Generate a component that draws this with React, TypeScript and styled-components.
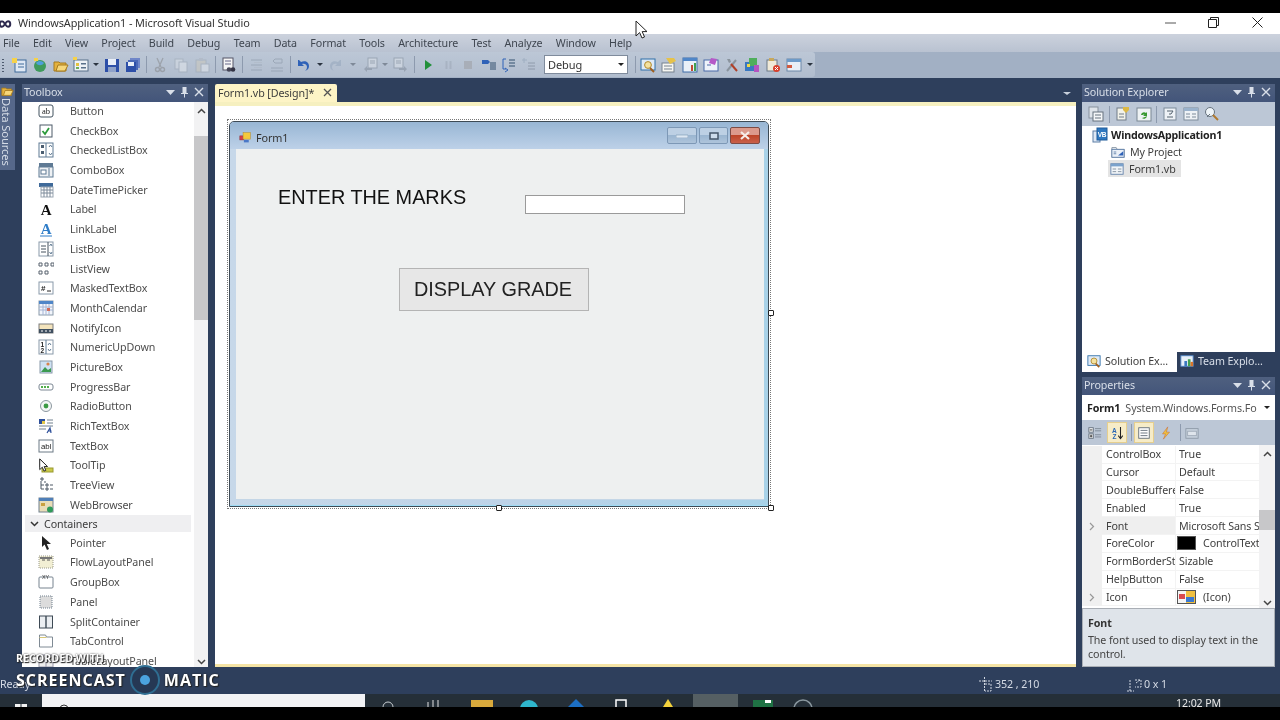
import React from 'react';
import styled, { createGlobalStyle } from 'styled-components';

const GlobalStyle = createGlobalStyle`
  html, body { margin: 0; padding: 0; background: #000; }
  body { font-family: "Noto Sans", "Open Sans", sans-serif; font-size: 10.7px; letter-spacing: -0.1px; overflow: hidden; }
  * { box-sizing: border-box; }
`;

const Frame = styled.div`
  position: relative;
  width: 1280px;
  height: 720px;
  display: flex;
  flex-direction: column;
  overflow: hidden;
  background: #000;
  filter: blur(0.3px);
`;
const BlackBar = styled.div`height: 13px; flex: none; background: #000;`;

const TitleBar = styled.div`
  height: 21px;
  flex: none;
  background: #fff;
  display: flex;
  align-items: center;
  color: #333;
  font-size: 10.9px;
`;
const VsLogo = styled.div`width: 18px; display: flex; align-items: center; overflow: hidden;`;
const TitleText = styled.div`flex: 1; padding-bottom: 2px;`;
const WinButton = styled.div<{ $w: number }>`
  width: ${p => p.$w}px;
  display: flex;
  justify-content: center;
  padding-bottom: 2px;
`;

const MenuBar = styled.div`
  height: 18px;
  flex: none;
  display: flex;
  align-items: center;
  padding: 0 0 1px 3px;
  gap: 13.3px;
  background: linear-gradient(#ccd2dd, #b9c2d1);
  color: #3f4650;
`;
const MenuItem = styled.div``;

const ToolStrip = styled.div`
  height: 26px;
  flex: none;
  background: #a2b0c4;
  display: flex;
`;
const ToolTray = styled.div`
  width: 815px;
  height: 25px;
  display: flex;
  align-items: center;
  background: linear-gradient(#bcc7d6, #b1bdce);
  border-radius: 0 3px 3px 0;
  position: relative;
`;
const Grip = styled.div`
  width: 8.5px;
  height: 14px;
  background-image: radial-gradient(#4d5a6e 50%, transparent 55%);
  background-size: 2px 3px;
  background-repeat: repeat-y;
  background-position: 2px 0;
`;
const ToolBtn = styled.div<{ $w: number; $faded?: boolean }>`
  width: ${p => p.$w}px;
  flex: none;
  display: flex;
  justify-content: center;
  align-items: center;
  opacity: ${p => (p.$faded ? 0.45 : 1)};
`;
const ToolSep = styled.div<{ $w: number }>`
  width: ${p => p.$w}px;
  flex: none;
  height: 17px;
  display: flex;
  justify-content: center;
  &::after { content: ''; width: 1px; background: #8d9aae; }
`;
const ToolGap = styled.div<{ $w: number }>`width: ${p => p.$w}px; flex: none;`;
const Caret = styled.div<{ $w: number; $faded?: boolean }>`
  width: ${p => p.$w}px;
  flex: none;
  display: flex;
  justify-content: center;
  opacity: ${p => (p.$faded ? 0.4 : 1)};
  &::after {
    content: '';
    border-left: 3px solid transparent;
    border-right: 3px solid transparent;
    border-top: 3px solid #2b3440;
  }
`;
const ConfigCombo = styled.div`
  width: 84px;
  height: 19px;
  margin-left: 5px;
  flex: none;
  background: #fff;
  border: 1px solid #7f8b9c;
  display: flex;
  align-items: center;
  justify-content: space-between;
  padding: 0 3px;
  color: #333;
  font-size: 11px;
`;
const ComboArrow = styled.span`
  border-left: 3px solid transparent;
  border-right: 3px solid transparent;
  border-top: 3px solid #222;
`;

const Main = styled.div`
  flex: 1;
  min-height: 0;
  display: flex;
  padding-top: 6px;
  background: #2e3f5c;
`;
const SideStrip = styled.div`width: 22px; flex: none;`;
const SideTab = styled.div`
  width: 15px;
  height: 86px;
  background: #56688a;
  display: flex;
  flex-direction: column;
  align-items: center;
  color: #d4dbe6;
`;
const SideTabText = styled.div`
  writing-mode: vertical-rl;
  font-size: 11.2px;
  margin: 1px 3px 0 0;
  line-height: 12px;
`;

const DockPane = styled.div`
  width: 186px;
  flex: none;
  display: flex;
  flex-direction: column;
`;
const PaneHeader = styled.div`
  height: 18px;
  flex: none;
  padding: 0 4px 2px 2px;
  display: flex;
  align-items: center;
  justify-content: space-between;
  background: linear-gradient(#4f607f, #43557a);
  color: #d9dfe9;
`;
const PaneTools = styled.div`display: flex; align-items: center; gap: 5px;`;
const ToolboxBody = styled.div`
  flex: 1;
  min-height: 0;
  display: flex;
  background: #fff;
`;
const ToolList = styled.div`flex: 1; min-width: 0; overflow: hidden;`;
const ToolRows = styled.div`margin-top: -0.8px;`;
const ToolRow = styled.div`
  height: 19.7px;
  display: flex;
  align-items: center;
  color: #4d4d4d;
`;
const ToolIcon = styled.div`
  width: 48px;
  padding-left: 16px;
  display: flex;
  flex: none;
`;
const GroupRow = styled.div`
  height: 18.3px;
  padding: 0.6px 1px;
  margin: 0 2px;
`;
const GroupInner = styled.div`
  height: 17px;
  padding-left: 5px;
  display: flex;
  align-items: center;
  gap: 5px;
  background: #efeff1;
  color: #3c3c3c;
`;
const ScrollTrack = styled.div<{ $w: number }>`
  width: ${p => p.$w}px;
  flex: none;
  display: flex;
  flex-direction: column;
  align-items: stretch;
  background: #f2f2f3;
`;
const ScrollEnd = styled.div<{ $h: number }>`
  height: ${p => p.$h}px;
  flex: none;
  display: flex;
  justify-content: center;
  padding-top: 6px;
`;
const ScrollThumb = styled.div<{ $h: number }>`
  height: ${p => p.$h}px;
  flex: none;
  background: #c7c7c9;
`;
const ScrollFill = styled.div`flex: 1;`;

const DocColumn = styled.div`
  width: 861px;
  margin-left: 7px;
  flex: none;
  display: flex;
  flex-direction: column;
`;
const DocTabs = styled.div`
  height: 18px;
  flex: none;
  display: flex;
  justify-content: space-between;
  align-items: stretch;
`;
const DocTab = styled.div`
  width: 122px;
  padding: 0 5px 1px 3px;
  display: flex;
  align-items: center;
  justify-content: space-between;
  background: #fdf4c6;
  border-radius: 2px 2px 0 0;
  color: #3d3d3d;
`;
const DocMenu = styled.div`
  width: 18px;
  padding-top: 8px;
  display: flex;
  justify-content: center;
  &::after {
    content: '';
    height: 0;
    border-left: 4px solid transparent;
    border-right: 4px solid transparent;
    border-top: 3px solid #c8d0dc;
  }
`;
const DocBody = styled.div`
  flex: 1;
  min-height: 0;
  background: #fff;
  border-top: 4px solid #f6f0c0;
  border-bottom: 3px solid #f5e4a5;
  padding: 13px 0 0 12px;
`;

const Selection = styled.div`
  position: relative;
  width: 544px;
  height: 390px;
  padding: 1px;
  border: 1px dotted #777;
`;
const Handle = styled.div<{ $x: number; $y: number }>`
  position: absolute;
  left: ${p => p.$x}px;
  top: ${p => p.$y}px;
  width: 6px;
  height: 6px;
  background: #fff;
  border: 1px solid #222;
  border-radius: 1px;
`;
const FormWindow = styled.div`
  height: 100%;
  display: flex;
  flex-direction: column;
  border: 1px solid #3d4a55;
  border-radius: 5px 5px 0 0;
  background: linear-gradient(90deg, #c7d8e9, #bed3e8 50%, #a8d2e8);
`;
const FormTitle = styled.div`
  height: 27px;
  flex: none;
  display: flex;
  align-items: center;
  padding: 0 8px 0 9px;
  background: linear-gradient(#98b6d4, #bdd1e8);
  border-radius: 4px 4px 0 0;
  color: #333;
`;
const FormName = styled.div`flex: 1; margin: 3px 0 0 4px; font-size: 10.8px;`;
const FormIcon = styled.div`display: flex; margin-top: 3px;`;
const Caption = styled.div<{ $w: number; $close?: boolean }>`
  width: ${p => p.$w}px;
  height: 17px;
  margin-left: 2px;
  display: flex;
  justify-content: center;
  align-items: center;
  border: 1px solid ${p => (p.$close ? '#7d4b45' : '#7d98b6')};
  border-radius: 2px;
  background: ${p =>
    p.$close ? 'linear-gradient(#dc9a8c 45%, #bd4529 50%, #c9604a)' : 'linear-gradient(#bdd0e4 45%, #9bb6d1 50%, #aec4db)'};
`;
const Client = styled.div`
  position: relative;
  flex: 1;
  margin: 0 4px 6px 6px;
  background: #eef0f0;
  box-shadow: 0 1px 0 #c4d6e6;
`;
const FormBase = styled.div`
  height: 1px;
  flex: none;
  background: #9fdcf5;
`;
const FormLabel = styled.div`
  position: absolute;
  left: 42px;
  top: 37px;
  font-family: "Liberation Sans", Arial, sans-serif;
  font-size: 19.85px;
  letter-spacing: 0;
  color: #111;
  white-space: nowrap;
`;
const FormInput = styled.div`
  position: absolute;
  left: 289px;
  top: 46px;
  width: 160px;
  height: 19px;
  background: #fff;
  border: 1px solid #9a9a9a;
`;
const FormButton = styled.div`
  position: absolute;
  left: 163px;
  top: 119px;
  width: 190px;
  height: 43px;
  padding-left: 14px;
  display: flex;
  align-items: center;
  font-family: "Liberation Sans", Arial, sans-serif;
  font-size: 19.85px;
  letter-spacing: 0;
  color: #222;
  background: #e7e7e7;
  border: 1px solid #b4b4b4;
`;

const RightColumn = styled.div`
  width: 193px;
  margin-left: 6px;
  flex: none;
  display: flex;
  flex-direction: column;
`;
const PaneBar = styled.div<{ $h: number }>`
  height: ${p => p.$h}px;
  flex: none;
  display: flex;
  align-items: center;
  background: #bcc7d6;
  padding-left: 3px;
`;
const SolutionTree = styled.div`
  height: 226px;
  flex: none;
  background: #fff;
  color: #3d3d3d;
`;
const TreeRow = styled.div<{ $indent: number; $bold?: boolean }>`
  height: 17.2px;
  padding-left: ${p => p.$indent}px;
  display: flex;
  align-items: center;
  gap: 3px;
  font-weight: ${p => (p.$bold ? 700 : 400)};
  letter-spacing: ${p => (p.$bold ? '-0.2px' : '-0.1px')};
  color: ${p => (p.$bold ? '#222' : '#3d3d3d')};
`;
const TreeLabel = styled.div<{ $selected?: boolean }>`
  display: flex;
  align-items: center;
  gap: 5px;
  height: 17px;
  padding: 0 5px 0 2px;
  background: ${p => (p.$selected ? '#e4e4e4' : 'transparent')};
`;
const PaneTabs = styled.div`
  height: 20px;
  flex: none;
  display: flex;
`;
const PaneTab = styled.div<{ $active?: boolean }>`
  width: ${p => (p.$active ? 95 : 98)}px;
  display: flex;
  align-items: center;
  gap: 4px;
  padding: 0 0 2px ${p => (p.$active ? 5 : 3)}px;
  background: ${p => (p.$active ? '#fff' : 'transparent')};
  color: ${p => (p.$active ? '#3d3d3d' : '#d9dfe9')};
`;
const PropsPane = styled.div`
  flex: 1;
  min-height: 0;
  margin-top: 5px;
  display: flex;
  flex-direction: column;
`;
const ObjectCombo = styled.div`
  height: 25px;
  flex: none;
  background: #fff;
  display: flex;
  align-items: center;
  padding: 0 5px;
  gap: 5px;
  color: #555;
  white-space: nowrap;
  overflow: hidden;
`;
const ObjectName = styled.b`color: #222; font-weight: 700;`;
const ObjectType = styled.span`flex: 1; overflow: hidden;`;
const PropToggle = styled.div<{ $on?: boolean }>`
  width: 20px;
  height: 21px;
  flex: none;
  margin-right: 2px;
  display: flex;
  align-items: center;
  justify-content: center;
  background: ${p => (p.$on ? '#f6ecc8' : 'transparent')};
  border: 1px solid ${p => (p.$on ? '#e6cf8e' : 'transparent')};
`;
const PropGrid = styled.div`
  height: 163px;
  flex: none;
  display: flex;
  background: #fff;
  overflow: hidden;
`;
const PropRows = styled.div`flex: 1; min-width: 0; padding-top: 0.8px;`;
const PropRow = styled.div`
  height: 17.85px;
  display: flex;
  align-items: center;
  color: #3f3f3f;
`;
const Gutter = styled.div`
  width: 20px;
  height: 100%;
  flex: none;
  display: flex;
  align-items: center;
  justify-content: center;
  background: #f0f0f0;
  color: #aaa;
`;
const PropName = styled.div<{ $hot?: boolean }>`
  width: 73px;
  height: 100%;
  flex: none;
  padding-left: 4px;
  display: flex;
  align-items: center;
  overflow: hidden;
  white-space: nowrap;
  border-bottom: 1px solid #f3f3f3;
  background: ${p => (p.$hot ? '#efefef' : 'transparent')};
`;
const PropValue = styled.div`
  flex: 1;
  min-width: 0;
  height: 100%;
  padding-left: 3px;
  display: flex;
  align-items: center;
  gap: 7px;
  overflow: hidden;
  white-space: nowrap;
  border-bottom: 1px solid #f3f3f3;
  border-left: 1px solid #f3f3f3;
`;
const Swatch = styled.div`
  width: 19px;
  height: 14px;
  margin-left: -2px;
  flex: none;
  display: flex;
  background: #000;
  border: 1px solid #555;
`;
const IconSwatchBox = styled(Swatch)`
  background: linear-gradient(90deg, #f4f4f4 50%, #f0c040 50%);
`;
const PropHelp = styled.div`
  flex: 1;
  min-height: 0;
  padding: 7px 5px 0;
  background: #dfe4ea;
  border: 1px solid #a9aeb5;
  color: #444;
  line-height: 14.5px;
`;
const HelpTitle = styled.div`font-weight: 700; color: #333; margin-bottom: 2px;`;

const StatusBar = styled.div`
  height: 27px;
  flex: none;
  display: flex;
  align-items: center;
  background: #2e3f5c;
  color: #d5dbe5;
  padding-top: 7px;
`;
const StatusText = styled.div`flex: none; width: 978px;`;
const StatusCell = styled.div<{ $w: number }>`
  width: ${p => p.$w}px;
  flex: none;
  display: flex;
  align-items: center;
  gap: 2px;
`;

const TaskBar = styled.div`
  height: 13px;
  flex: none;
  display: flex;
  align-items: flex-start;
  background: #252f38;
  overflow: hidden;
`;
const StartSlot = styled.div`
  width: 42px;
  height: 13px;
  flex: none;
  display: flex;
  justify-content: center;
  padding-top: 10px;
`;
const SearchBox = styled.div`
  width: 323px;
  height: 13px;
  flex: none;
  padding: 10px 0 0 17px;
  display: flex;
  background: #f3f3f5;
`;
const TaskIcon = styled.div<{ $w: number; $active?: boolean }>`
  width: ${p => p.$w}px;
  height: 13px;
  flex: none;
  display: flex;
  justify-content: center;
  padding-top: 5px;
  background: ${p => (p.$active ? '#555f63' : 'transparent')};
`;
const Clock = styled.div`
  width: 44px;
  margin-left: 358px;
  margin-top: 3px;
  flex: none;
  color: #e8e8e8;
  font-size: 10.6px;
  line-height: 13px;
  white-space: nowrap;
`;

const Watermark = styled.div`
  position: absolute;
  left: 16px;
  top: 651px;
  color: #fff;
  font-family: "Open Sans", sans-serif;
  font-weight: 700;
  letter-spacing: 0;
  text-shadow: 0 0 2px #222, 1px 1px 1px #222;
`;
const WmSmall = styled.div`font-size: 10.5px; line-height: 14px; letter-spacing: 0.1px;`;
const WmRow = styled.div`
  display: flex;
  align-items: center;
  gap: 4px;
  font-size: 16px;
  line-height: 30px;
  letter-spacing: 1px;
`;
const WmLogo = styled.div`
  width: 30px;
  height: 30px;
  display: flex;
  align-items: center;
  justify-content: center;
  border: 2px solid #2f6e92;
  border-radius: 50%;
  background: rgba(30, 50, 75, 0.5);
  &::after { content: ''; width: 10px; height: 10px; border-radius: 50%; background: #4ba3df; }
`;
const Cursor = styled.svg<{ $x: number; $y: number }>`
  position: absolute;
  left: ${p => p.$x}px;
  top: ${p => p.$y}px;
`;

const arrowPath = 'M1 1V16L4.6 12.6 7 18 9.5 17 7.2 11.6H12Z';

const F = ({ children }: { children: React.ReactNode }) => <>{children}</>;

// 16x16 drawings for the toolbar and the toolbox
const icons: Record<string, React.ReactNode> = {
  newProject: <F><rect x="4" y="3" width="11" height="12" fill="#dfe8f4" stroke="#3f6a9a" /><rect x="1" y="1" width="5" height="5" fill="#f6d24a" /><path d="M7 7h6M7 10h6" stroke="#3f6a9a" /></F>,
  web: <F><circle cx="8" cy="9" r="6" fill="#3f9a5c" /><path d="M4 6c3-3 6-2 8 0-2 3-6 3-8 0Z" fill="#4f9fdc" /><rect x="2" y="1" width="4" height="3" fill="#f6d24a" /></F>,
  open: <F><path d="M1 5h5l1 1h6v8H1Z" fill="#e4b23e" stroke="#a57a1e" /><path d="M3 14l2-6h10l-3 6Z" fill="#f6d77a" stroke="#a57a1e" /></F>,
  addItem: <F><rect x="1" y="3" width="14" height="11" fill="#eef2f6" stroke="#59708a" /><rect x="3" y="6" width="3" height="3" fill="#e5c23e" /><rect x="8" y="6" width="5" height="1.5" fill="#59708a" /><rect x="3" y="10" width="3" height="2" fill="#6fae5c" /><rect x="8" y="10" width="5" height="1.5" fill="#59708a" /><rect x="0" y="0" width="4" height="3" fill="#f6d24a" /></F>,
  save: <F><rect x="1" y="2" width="14" height="13" fill="#2d4fa8" /><rect x="4" y="2" width="8" height="6" fill="#e8eef8" /><rect x="4" y="10" width="8" height="5" fill="#8fa2c8" /></F>,
  saveAll: <F><rect x="5" y="1" width="10" height="10" fill="#6f86c8" /><rect x="3" y="3" width="10" height="10" fill="#4a68b8" /><rect x="1" y="5" width="10" height="10" fill="#2d4fa8" /><rect x="3" y="5" width="6" height="4" fill="#e8eef8" /></F>,
  cut: <F><path d="M5 1l4 9M11 1L7 10" stroke="#7c7c7c" strokeWidth="1.3" /><circle cx="5.5" cy="12.5" r="2" fill="none" stroke="#7c7c7c" strokeWidth="1.4" /><circle cx="10.5" cy="12.5" r="2" fill="none" stroke="#7c7c7c" strokeWidth="1.4" /></F>,
  copy: <F><rect x="2" y="2" width="8" height="10" fill="#dfe4ea" stroke="#98a2ae" /><rect x="6" y="5" width="8" height="10" fill="#eef1f4" stroke="#98a2ae" /></F>,
  paste: <F><rect x="2" y="3" width="10" height="12" fill="#cfc9b8" stroke="#98a2ae" /><rect x="5" y="1" width="4" height="3" fill="#aab2bc" /><rect x="7" y="7" width="8" height="8" fill="#eef1f4" stroke="#98a2ae" /></F>,
  find: <F><rect x="2" y="1" width="10" height="12" fill="#f5f5f5" stroke="#556" /><path d="M4 4h6M4 7h6" stroke="#668" /><circle cx="12" cy="12.5" r="2.3" fill="#334" /><circle cx="8" cy="12.5" r="2.3" fill="#445" /></F>,
  indent: <F><path d="M3 3h11M3 8h11M3 13h11" stroke="#7b8797" /><path d="M6 5.5h8M6 10.5h8" stroke="#aeb6c2" /></F>,
  unindent: <F><path d="M2 14h12M2 11h12" stroke="#7b8797" /><path d="M6 2h7v4H6L4 4Z" fill="none" stroke="#7b8797" /></F>,
  undo: <F><path d="M3 3v6h6L7 7c3-1 5 1 5 3 0 2-1 3-2 4 3-1 4-3 4-5 0-4-4-6-8-4L4 3Z" fill="#2f62b8" /></F>,
  redo: <F><path d="M13 3v6H7l2-2c-3-1-5 1-5 3 0 2 1 3 2 4-3-1-4-3-4-5 0-4 4-6 8-4l2-2Z" fill="#8ea0b8" /></F>,
  navBack: <F><rect x="5" y="1" width="9" height="10" fill="#e4e8ee" stroke="#77828f" /><path d="M7 4h5M7 6h5" stroke="#77828f" /><path d="M1 12l3-3v2h5v2H4v2Z" fill="#77828f" /></F>,
  navFwd: <F><rect x="2" y="1" width="9" height="10" fill="#e4e8ee" stroke="#77828f" /><path d="M4 4h5M4 6h5" stroke="#77828f" /><path d="M15 12l-3-3v2H7v2h5v2Z" fill="#77828f" /></F>,
  start: <path d="M5 3l7 5-7 5Z" fill="#22903a" />,
  pause: <path d="M5.5 4h2v8h-2ZM9.5 4h2v8h-2Z" fill="#98a2b0" />,
  stop: <rect x="4" y="4" width="8" height="8" fill="#a8aeb8" />,
  stepInto: <F><path d="M1 3h6l2 2-2 2H1Z" fill="#2f62b8" /><path d="M9 6h6M9 8h6M9 10h6M9 12h6" stroke="#33506f" /></F>,
  stepOver: <F><path d="M5 2H2v10h3M4 11l3 2-3 2" stroke="#2f62b8" fill="none" /><path d="M8 3h6M8 6h6M8 9h6" stroke="#33506f" /></F>,
  stepOut: <F><path d="M1 3h5M3 1v5" stroke="#8296ac" /><path d="M7 6h7M7 9h7M7 12h7" stroke="#606d7d" /></F>,
  solution: <F><rect x="1" y="2" width="14" height="11" fill="#dfeaf6" stroke="#2f6fa8" /><circle cx="8" cy="8" r="3.4" fill="#f4e2a0" stroke="#b08a30" /><path d="M10 11l4 4" stroke="#a06020" strokeWidth="2" /></F>,
  properties: <F><rect x="1" y="6" width="12" height="9" fill="#f6f6f2" stroke="#77828f" /><path d="M3 9h8M3 12h8" stroke="#77828f" /><path d="M5 1l8 0 2 3-6 3Z" fill="#e6c24a" /></F>,
  objBrowser: <F><rect x="1" y="1" width="14" height="14" fill="#e9f0f8" stroke="#3e6ca8" /><rect x="1" y="1" width="14" height="3" fill="#4f86c8" /><rect x="9" y="8" width="2" height="6" fill="#c04a30" /><rect x="12" y="6" width="2" height="8" fill="#40a050" /></F>,
  dataSrc: <F><rect x="1" y="3" width="14" height="11" fill="#eef2fa" stroke="#4a6aa8" /><path d="M8 1l6 1-2 6-6-2Z" fill="#b558c8" /><path d="M4 8h4" stroke="#4a6aa8" /></F>,
  tools: <F><path d="M3 14L12 3" stroke="#8a949e" strokeWidth="2" /><path d="M13 14L7 7" stroke="#b04028" strokeWidth="2" /><path d="M3 2h3l1 3-2 1Z" fill="#8a949e" /></F>,
  layers: <F><rect x="1" y="5" width="9" height="9" fill="#3a78c0" /><rect x="5" y="1" width="8" height="8" fill="#4fae5c" /><rect x="10" y="8" width="5" height="7" fill="#b554c0" /><rect x="3" y="7" width="3" height="3" fill="#f0d84a" /></F>,
  clipError: <F><rect x="2" y="3" width="10" height="11" fill="#f0ead8" stroke="#6d7a88" /><rect x="4" y="1" width="5" height="3" fill="#c8a85c" /><circle cx="11.5" cy="11.5" r="3.5" fill="#d8402c" /><path d="M10 10l3 3M13 10l-3 3" stroke="#fff" /></F>,
  panelBar: <F><rect x="1" y="2" width="14" height="12" fill="#e8eef6" stroke="#6d88a8" /><rect x="1" y="2" width="14" height="3" fill="#6d9ac8" /><rect x="1" y="8" width="5" height="3" fill="#d05a40" /></F>,

  seFiles: <F><rect x="1" y="1" width="9" height="11" fill="#dfe4ea" stroke="#87929e" /><rect x="5" y="6" width="10" height="9" fill="#f4f6f8" stroke="#66727e" /><path d="M7 9h6M7 12h6" stroke="#66727e" /></F>,
  seDocs: <F><rect x="2" y="2" width="9" height="12" fill="#f2f2ea" stroke="#707c88" /><path d="M8 1h6v3l-3 3-3-3Z" fill="#dcb846" /><path d="M4 8h5M4 11h5" stroke="#707c88" /></F>,
  seRefresh: <F><rect x="1" y="2" width="14" height="13" fill="#eef2f4" stroke="#7a8894" /><path d="M5 9a3 3 0 0 1 5-2l1-1v4H7l1.500-1.300A1.500 1.500 0 0 0 6.500 9Z" fill="#37982f" /><path d="M11 10a3 3 0 0 1-5 2l3-1Z" fill="#37982f" /></F>,
  seCode: <F><rect x="2" y="2" width="12" height="12" fill="#eef2f6" stroke="#7d8b9a" /><path d="M5 5h6l-2 3H7M5 11h6" stroke="#54626f" fill="none" /></F>,
  seDesigner: <F><rect x="1" y="2" width="14" height="12" fill="#eef2f6" stroke="#7d8b9a" /><rect x="1" y="2" width="14" height="3" fill="#9ab2cc" /><path d="M3 8h4M9 8h4M3 11h4M9 11h4" stroke="#7d8b9a" /></F>,
  seView: <F><circle cx="6" cy="6" r="4.5" fill="#eef4f8" stroke="#66727e" /><path d="M9 9l5 5" stroke="#b07a30" strokeWidth="2" /><path d="M3 11l3-3" stroke="#66727e" /></F>,
  vbProject: <F><rect x="1" y="4" width="7" height="11" fill="#dfe8f4" stroke="#5d7ea6" /><rect x="5" y="1" width="10" height="12" fill="#2e78c0" stroke="#1f5a9a" /><text x="10" y="10" fontSize="6.5" fontWeight="700" fontFamily="Liberation Sans" textAnchor="middle" fill="#fff">VB</text></F>,
  myProject: <F><path d="M1 3h5l1 2h8v9H1Z" fill="#eef2f6" stroke="#7d8b9a" /><rect x="1" y="5" width="14" height="9" fill="#eaf0f8" stroke="#5e7fa8" /><path d="M8 12l6-5v5Z" fill="#2f62b8" /><path d="M3 8h3M3 10h3" stroke="#5e7fa8" /></F>,
  formFile: <F><rect x="1" y="2" width="14" height="12" fill="#f2f5f8" stroke="#5e7fa8" /><rect x="1" y="2" width="14" height="3" fill="#7ba2cc" /><path d="M3 8h4M9 8h4M3 11h4M9 11h4" stroke="#7d8b9a" /></F>,
  teamExp: <F><rect x="1" y="2" width="14" height="12" fill="#e8f0f8" stroke="#4f86c8" /><rect x="5" y="8" width="3" height="6" fill="#3a78c0" /><rect x="9" y="6" width="3" height="8" fill="#40a050" /><rect x="12" y="9" width="3" height="5" fill="#d8742c" /></F>,
  formIco: <F><rect x="1" y="6" width="5" height="5" fill="#d63c48" stroke="#8a3038" strokeWidth=".6" /><rect x="5" y="2" width="9" height="8" fill="#f4c93c" stroke="#b08a30" strokeWidth=".6" /><rect x="6" y="11" width="6" height="3" fill="#4a78c8" /></F>,
  propCategory: <F><rect x="1" y="2" width="5" height="5" fill="#fff" stroke="#5c6874" /><rect x="1" y="9" width="5" height="5" fill="#fff" stroke="#5c6874" /><path d="M2 4.500h3M2 11.500h3M3.500 10v3" stroke="#222" /><path d="M8 3h7M8 5.500h7M8 10h7M8 12.500h7" stroke="#7a8692" /></F>,
  propSort: <F><text x="5" y="7.500" fontSize="7.5" fontWeight="700" fontFamily="Liberation Sans" textAnchor="middle" fill="#2b68b4">A</text><text x="5" y="15" fontSize="7.5" fontWeight="700" fontFamily="Liberation Sans" textAnchor="middle" fill="#2b68b4">Z</text><path d="M12 1v13M9.500 11l2.500 3.500 2.500-3.500" stroke="#222" fill="none" strokeWidth="1.2" /></F>,
  propPage: <F><rect x="2" y="2" width="12" height="12" fill="#fff" stroke="#5c6874" /><path d="M4 5h8M4 8h8M4 11h8" stroke="#5c6874" /></F>,
  propEvents: <path d="M10 1L4 9h3.500L5 15l7-8H8.500Z" fill="#f0c23c" stroke="#c86a3a" strokeWidth=".6" />,
  propPages: <F><rect x="1" y="3" width="14" height="11" fill="#c5cfdb" stroke="#8c98a6" /><rect x="3" y="6" width="10" height="5" fill="#dfe5ec" stroke="#a0abb8" /></F>,

  button: <F><rect x="1" y="2" width="14" height="12" rx="2" fill="#fff" stroke="#42525f" /><text x="8" y="11" fontSize="8.5" fontFamily="Liberation Serif" textAnchor="middle" fill="#222">ab</text></F>,
  checkBox: <F><rect x="2" y="2" width="12" height="12" fill="#fff" stroke="#4c5b68" /><path d="M4.5 8l2.5 3 4-6" stroke="#2b9a3a" strokeWidth="1.8" fill="none" /></F>,
  checkedList: <F><rect x="1" y="1" width="14" height="14" fill="#fff" stroke="#5f7a94" /><rect x="3" y="3" width="3" height="3" fill="#4a5d70" /><rect x="3" y="9" width="3" height="3" fill="#4a5d70" /><path d="M8 1v14M11 5l1.5-2L14 5M11 11l1.5 2 1.500-2" stroke="#5f7a94" fill="none" /></F>,
  combo: <F><rect x="1" y="1" width="14" height="4" fill="#5f7a94" /><rect x="1" y="5" width="14" height="10" fill="#eef1f4" stroke="#5f7a94" /><rect x="3" y="8" width="5" height="4" fill="#fff" stroke="#5f7a94" /><path d="M11 6v8" stroke="#5f7a94" /></F>,
  datePicker: <F><rect x="1" y="1" width="14" height="4" fill="#3f6a9a" /><rect x="3" y="5" width="12" height="10" fill="#fff" stroke="#9aa6b2" /><path d="M3 8h12M3 11h12M6 5v10M9 5v10M12 5v10" stroke="#7c8a99" /></F>,
  label: <text x="8" y="14" fontSize="15" fontWeight="700" fontFamily="Liberation Serif" textAnchor="middle" fill="#111">A</text>,
  linkLabel: <F><text x="8" y="13" fontSize="15" fontWeight="700" fontFamily="Liberation Serif" textAnchor="middle" fill="#2f7dc8">A</text><path d="M2 15h12" stroke="#2f7dc8" /></F>,
  listBox: <F><rect x="1" y="1" width="14" height="14" fill="#fff" stroke="#8a9aaa" /><path d="M3 5h5M3 8h5M3 11h5M10 1v14" stroke="#44505c" /><path d="M11.5 5l1.5-2 1 2M11.5 11l1.5 2 1-2" stroke="#5f7a94" fill="none" /></F>,
  listView: <path d="M1 2h3v3H1ZM7 2h3v3H7ZM13 2h3v3h-3ZM1 10h3v3H1ZM7 10h3v3H7Z" fill="none" stroke="#59636e" />,
  masked: <F><rect x="1" y="2" width="14" height="12" fill="#fff" stroke="#8a9aaa" /><text x="3" y="11" fontSize="8" fontWeight="700" fontFamily="Liberation Sans" fill="#222">#</text><path d="M9 11h4" stroke="#222" /></F>,
  month: <F><rect x="1" y="1" width="14" height="14" fill="#f2f5fb" stroke="#8a9aaa" /><rect x="1" y="1" width="14" height="3" fill="#4f86c8" /><path d="M1 7h14M1 10h14M5 4v11M8 4v11M11 4v11" stroke="#a4b4d4" /><rect x="9" y="8" width="3" height="3" fill="#d26a58" /></F>,
  notify: <F><rect x="1" y="4" width="14" height="9" fill="#f4e4bc" stroke="#7c7c7c" /><rect x="1" y="9" width="14" height="4" fill="#3f4f60" /><path d="M3 11h2M7 11h2M11 11h2" stroke="#fff" /></F>,
  numeric: <F><rect x="1" y="1" width="14" height="14" fill="#fff" stroke="#8a9aaa" /><text x="2.5" y="7.5" fontSize="6.5" fontWeight="700" fontFamily="Liberation Sans" fill="#222">1</text><text x="2.5" y="14" fontSize="6.5" fontWeight="700" fontFamily="Liberation Sans" fill="#222">2</text><path d="M8 1v14M10 6l1.5-2L13 6M10 10l1.5 2L13 10" stroke="#5f7a94" fill="none" /></F>,
  picture: <F><rect x="2" y="2" width="12" height="12" fill="#cfe2f4" stroke="#8a9aaa" /><path d="M3 13l4-5 3 3 3-2v4Z" fill="#3b9a50" /><circle cx="10" cy="5" r="1.6" fill="#d8824a" /></F>,
  progress: <F><rect x="1" y="5" width="14" height="6" rx="2" fill="#fff" stroke="#7c8894" /><path d="M3 7h2v2H3ZM6 7h2v2H6ZM9 7h2v2H9Z" fill="#4fae4a" /></F>,
  radio: <F><circle cx="8" cy="8" r="5.5" fill="#f4f6f6" stroke="#8b979f" /><circle cx="8" cy="8" r="2.4" fill="#3c9a44" /></F>,
  richText: <F><rect x="1" y="1" width="6" height="5" fill="#2d4f9a" /><rect x="4" y="3" width="3" height="3" fill="#e4c84a" /><path d="M9 2h6M9 5h6M1 8h14M1 11h7" stroke="#70808e" /><path d="M9 15l3-5 1 5M10.5 13h3" stroke="#2d4f9a" fill="none" strokeWidth="1.2" /></F>,
  textBox: <F><rect x="1" y="2" width="14" height="12" fill="#fff" stroke="#6d7a86" /><text x="8" y="11" fontSize="7.8" fontFamily="Liberation Sans" textAnchor="middle" fill="#222">abl</text></F>,
  toolTip: <F><rect x="4" y="11" width="11" height="4" fill="#c8c84a" stroke="#9a9a30" /><path d="M2 2v8l2-2 1 3 1-.4L5 8h3Z" fill="#fff" stroke="#222" strokeWidth=".8" /></F>,
  treeView: <path d="M3 1h2v2H3ZM6 5h2M3 4v8M3 8h3M3 12h3M8 7h2v2H8ZM8 11h2v2H8ZM12 8h3M12 12h3" fill="none" stroke="#4c5864" />,
  webBrowser: <F><rect x="1" y="1" width="14" height="14" fill="#e9ddb8" stroke="#70808e" /><rect x="1" y="1" width="14" height="3" fill="#4f7fb8" /><rect x="3" y="6" width="4" height="3" fill="#c8a040" /><circle cx="12" cy="12.5" r="3" fill="#2f9a5a" /></F>,
  pointer: <path d="M4 1v11l2.6-2.5L9 15l2-1-2.2-5H13Z" fill="#222" />,
  flow: <F><rect x="1" y="2" width="14" height="12" fill="#f2efd4" stroke="#9a9a8a" strokeDasharray="1 1" /><path d="M2 4h12" stroke="#777" strokeWidth="2" /><path d="M4 6h3M9 6h3" stroke="#555" /></F>,
  groupBox: <F><rect x="1" y="3" width="14" height="11" rx="1" fill="#fff" stroke="#77838f" /><text x="7.5" y="5" fontSize="5.5" fontFamily="Liberation Sans" textAnchor="middle" fill="#333">XY</text></F>,
  panel: <rect x="2" y="2" width="12" height="12" fill="#dcdcdc" stroke="#70808e" strokeDasharray="1 1" />,
  split: <F><rect x="1.5" y="2" width="13" height="12" fill="#eceff2" stroke="#3d4954" /><path d="M8 2v12" stroke="#3d4954" strokeWidth="1.4" /></F>,
  tabControl: <F><path d="M1.5 14V2h6l1 2h6v10Z" fill="#fff" stroke="#7f8a94" /><path d="M1.5 4.5h7" stroke="#d8c878" /></F>,
  table: <F><rect x="1" y="2" width="14" height="12" fill="#eeeeee" stroke="#99a" /><path d="M1 8h14M8 2v12" stroke="#99a" /></F>,
};

const Ico = ({ name, size = 16 }: { name: string; size?: number }) => (
  <svg width={size} height={size} viewBox="0 0 16 16" style={{ flex: 'none' }}>{icons[name]}</svg>
);

const PaneGlyphs = ({ color = '#d9dfe9' }: { color?: string }) => (
  <PaneTools>
    <svg width="9" height="6"><path d="M0 1h9L4.5 6Z" fill={color} /></svg>
    <svg width="9" height="12"><path d="M2.5 1h4v6h1.5v1H5v3.5H4V8H1V7h1.5Z" fill={color} /></svg>
    <svg width="10" height="10"><path d="M1 1l8 8M9 1L1 9" stroke={color} strokeWidth="1.4" /></svg>
  </PaneTools>
);

const Chevron = ({ up, color = '#444' }: { up?: boolean; color?: string }) => (
  <svg width="9" height="6" viewBox="0 0 9 6">
    <path d={up ? 'M1 5l3.5-3.5L8 5' : 'M1 1l3.5 3.5L8 1'} fill="none" stroke={color} strokeWidth="1.5" />
  </svg>
);

const menus = ['File', 'Edit', 'View', 'Project', 'Build', 'Debug', 'Team', 'Data', 'Format', 'Tools', 'Architecture', 'Test', 'Analyze', 'Window', 'Help'];

type ToolItem =
  | { kind: 'btn'; icon: string; w: number; faded?: boolean }
  | { kind: 'sep'; w: number }
  | { kind: 'gap'; w: number }
  | { kind: 'caret'; w: number; faded?: boolean };

const btn = (icon: string, w = 21, faded = false): ToolItem => ({ kind: 'btn', icon, w, faded });
const sep = (w = 6): ToolItem => ({ kind: 'sep', w });
const caret = (w: number, faded = false): ToolItem => ({ kind: 'caret', w, faded });

const leftTools: ToolItem[] = [
  btn('newProject'), btn('web'), btn('open', 20.5), btn('addItem', 20), caret(10), btn('save'), btn('saveAll'), sep(),
  btn('cut', 21, true), btn('copy', 21, true), btn('paste', 21, true), sep(), btn('find'), sep(),
  btn('indent', 21, true), btn('unindent', 21, true), sep(), btn('undo', 19), caret(16), btn('redo', 16, true), caret(18, true),
  btn('navBack', 18, true), caret(9, true), btn('navFwd', 22, true), sep(),
  btn('start'), btn('pause', 20, true), btn('stop', 20), btn('stepInto', 21), btn('stepOver', 20), btn('stepOut', 20, true),
];
const rightTools: ToolItem[] = [
  sep(14), btn('solution', 12), { kind: 'gap', w: 4.5 }, btn('properties', 21), btn('objBrowser', 21), btn('dataSrc', 21), btn('tools', 20.5),
  btn('layers', 20.5), btn('clipError', 21), btn('panelBar', 21),
];

const renderTool = (t: ToolItem, i: number) => {
  if (t.kind === 'sep') return <ToolSep key={i} $w={t.w} />;
  if (t.kind === 'gap') return <ToolGap key={i} $w={t.w} />;
  if (t.kind === 'caret') return <Caret key={i} $w={t.w} $faded={t.faded} />;
  return <ToolBtn key={i} $w={t.w} $faded={t.faded}><Ico name={t.icon} /></ToolBtn>;
};

const formsTools: [string, string][] = [
  ['button', 'Button'], ['checkBox', 'CheckBox'], ['checkedList', 'CheckedListBox'], ['combo', 'ComboBox'],
  ['datePicker', 'DateTimePicker'], ['label', 'Label'], ['linkLabel', 'LinkLabel'], ['listBox', 'ListBox'],
  ['listView', 'ListView'], ['masked', 'MaskedTextBox'], ['month', 'MonthCalendar'], ['notify', 'NotifyIcon'],
  ['numeric', 'NumericUpDown'], ['picture', 'PictureBox'], ['progress', 'ProgressBar'], ['radio', 'RadioButton'],
  ['richText', 'RichTextBox'], ['textBox', 'TextBox'], ['toolTip', 'ToolTip'], ['treeView', 'TreeView'],
  ['webBrowser', 'WebBrowser'],
];
const containerTools: [string, string][] = [
  ['pointer', 'Pointer'], ['flow', 'FlowLayoutPanel'], ['groupBox', 'GroupBox'], ['panel', 'Panel'],
  ['split', 'SplitContainer'], ['tabControl', 'TabControl'], ['table', 'TableLayoutPanel'],
];

const IconSwatch = () => (
  <IconSwatchBox>
    <svg width="17" height="12"><rect x="1" y="3" width="6" height="5" fill="#d84a50" /><rect x="8" y="6" width="8" height="5" fill="#3a78d0" /></svg>
  </IconSwatchBox>
);

const props: { name: string; value: string; expand?: boolean; hot?: boolean; swatch?: 'black' | 'icon' }[] = [
  { name: 'ControlBox', value: 'True' },
  { name: 'Cursor', value: 'Default' },
  { name: 'DoubleBuffered', value: 'False' },
  { name: 'Enabled', value: 'True' },
  { name: 'Font', value: 'Microsoft Sans Serif', expand: true, hot: true },
  { name: 'ForeColor', value: 'ControlText', swatch: 'black' },
  { name: 'FormBorderStyle', value: 'Sizable' },
  { name: 'HelpButton', value: 'False' },
  { name: 'Icon', value: '(Icon)', expand: true, swatch: 'icon' },
];

export default function App() {
  return (
    <Frame>
      <GlobalStyle />
      <BlackBar />
      <TitleBar>
        <VsLogo>
          <svg width="14" height="8" viewBox="0 0 14 8" style={{ marginLeft: -2 }}>
            <path d="M4 1.2C1 1.2 1 6.8 4 6.8 6.5 6.8 7.5 1.2 10 1.2 13 1.2 13 6.8 10 6.8 7.5 6.8 6.5 1.2 4 1.2Z" fill="none" stroke="#2e2a4f" strokeWidth="2" />
          </svg>
        </VsLogo>
        <TitleText>WindowsApplication1 - Microsoft Visual Studio</TitleText>
        <WinButton $w={42}><svg width="11" height="2"><path d="M0 1h11" stroke="#555" /></svg></WinButton>
        <WinButton $w={44}><svg width="11" height="11"><path d="M.5 2.5h8v8h-8ZM2.5 2.5v-2h8v8h-2" fill="none" stroke="#222" /></svg></WinButton>
        <WinButton $w={44}><svg width="11" height="11"><path d="M.5.5l10 10M10.5.5l-10 10" stroke="#222" /></svg></WinButton>
        <WinButton $w={1} />
      </TitleBar>
      <MenuBar>
        {menus.map(m => <MenuItem key={m}>{m}</MenuItem>)}
      </MenuBar>
      <ToolStrip>
        <ToolTray>
          <Grip />
          {leftTools.map(renderTool)}
          <ConfigCombo>Debug<ComboArrow /></ConfigCombo>
          {rightTools.map((t, i) => renderTool(t, i + 100))}
          <Caret $w={10} />
        </ToolTray>
      </ToolStrip>
      <Main>
        <SideStrip>
          <SideTab>
            <Ico name="open" size={13} />
            <SideTabText>Data Sources</SideTabText>
          </SideTab>
        </SideStrip>
        <DockPane>
          <PaneHeader>Toolbox<PaneGlyphs /></PaneHeader>
          <ToolboxBody>
            <ToolList>
              <ToolRows>
                {formsTools.map(([icon, text]) => (
                  <ToolRow key={text}><ToolIcon><Ico name={icon} /></ToolIcon>{text}</ToolRow>
                ))}
                <GroupRow>
                  <GroupInner><Chevron color="#333" />Containers</GroupInner>
                </GroupRow>
                {containerTools.map(([icon, text]) => (
                  <ToolRow key={text}><ToolIcon><Ico name={icon} /></ToolIcon>{text}</ToolRow>
                ))}
              </ToolRows>
            </ToolList>
            <ScrollTrack $w={14}>
              <ScrollEnd $h={34}><Chevron up /></ScrollEnd>
              <ScrollThumb $h={184} />
              <ScrollFill />
              <ScrollEnd $h={14}><Chevron /></ScrollEnd>
            </ScrollTrack>
          </ToolboxBody>
        </DockPane>
        <DocColumn>
          <DocTabs>
            <DocTab>
              Form1.vb [Design]*
              <svg width="9" height="9"><path d="M1 1l7 7M8 1L1 8" stroke="#555" strokeWidth="1.3" /></svg>
            </DocTab>
            <DocMenu />
          </DocTabs>
          <DocBody>
            <Selection>
              <FormWindow>
                <FormTitle>
                  <FormIcon><Ico name="formIco" size={13} /></FormIcon>
                  <FormName>Form1</FormName>
                  <Caption $w={30}><svg width="12" height="4"><rect width="12" height="3" y="1" fill="#dde8f3" stroke="#6a87a4" strokeWidth=".5" /></svg></Caption>
                  <Caption $w={29}><svg width="10" height="8"><path d="M1 1h8v6H1Z" fill="#cddcec" stroke="#44566a" strokeWidth="1.5" /></svg></Caption>
                  <Caption $w={30} $close><svg width="12" height="9"><path d="M2 1l8 7M10 1L2 8" stroke="#f6ece8" strokeWidth="2.2" /></svg></Caption>
                </FormTitle>
                <Client>
                  <FormLabel>ENTER THE MARKS</FormLabel>
                  <FormInput />
                  <FormButton>DISPLAY GRADE</FormButton>
                </Client>
                <FormBase />
              </FormWindow>
              <Handle $x={540} $y={190} />
              <Handle $x={268} $y={385} />
              <Handle $x={540} $y={385} />
            </Selection>
          </DocBody>
        </DocColumn>
        <RightColumn>
          <PaneHeader>Solution Explorer<PaneGlyphs /></PaneHeader>
          <PaneBar $h={24}>
            <ToolBtn $w={21}><Ico name="seFiles" /></ToolBtn>
            <ToolSep $w={6} />
            <ToolBtn $w={21}><Ico name="seDocs" /></ToolBtn>
            <ToolBtn $w={21}><Ico name="seRefresh" /></ToolBtn>
            <ToolSep $w={5} />
            <ToolBtn $w={21}><Ico name="seCode" /></ToolBtn>
            <ToolBtn $w={21}><Ico name="seDesigner" /></ToolBtn>
            <ToolBtn $w={21}><Ico name="seView" /></ToolBtn>
          </PaneBar>
          <SolutionTree>
            <TreeRow $indent={10} $bold><Ico name="vbProject" />WindowsApplication1</TreeRow>
            <TreeRow $indent={27}><TreeLabel><Ico name="myProject" size={14} />My Project</TreeLabel></TreeRow>
            <TreeRow $indent={26}><TreeLabel $selected><Ico name="formFile" size={14} />Form1.vb</TreeLabel></TreeRow>
          </SolutionTree>
          <PaneTabs>
            <PaneTab $active><Ico name="solution" size={14} />Solution Ex...</PaneTab>
            <PaneTab><Ico name="teamExp" size={14} />Team Explo...</PaneTab>
          </PaneTabs>
          <PropsPane>
            <PaneHeader>Properties<PaneGlyphs /></PaneHeader>
            <ObjectCombo>
              <ObjectName>Form1</ObjectName>
              <ObjectType>System.Windows.Forms.Fo</ObjectType>
              <ComboArrow />
            </ObjectCombo>
            <PaneBar $h={25}>
              <PropToggle><Ico name="propCategory" size={14} /></PropToggle>
              <PropToggle $on><Ico name="propSort" size={14} /></PropToggle>
              <ToolSep $w={5} />
              <PropToggle $on><Ico name="propPage" size={14} /></PropToggle>
              <PropToggle><Ico name="propEvents" size={14} /></PropToggle>
              <ToolSep $w={4} />
              <PropToggle><Ico name="propPages" size={14} /></PropToggle>
            </PaneBar>
            <PropGrid>
              <PropRows>
                {props.map(p => (
                  <PropRow key={p.name}>
                    <Gutter>{p.expand && <svg width="6" height="9"><path d="M1 1l3.5 3.5L1 8" fill="none" stroke="#999" strokeWidth="1.2" /></svg>}</Gutter>
                    <PropName $hot={p.hot}>{p.name}</PropName>
                    <PropValue>
                      {p.swatch === 'black' && <Swatch />}
                      {p.swatch === 'icon' && <IconSwatch />}
                      {p.value}
                    </PropValue>
                  </PropRow>
                ))}
              </PropRows>
              <ScrollTrack $w={16}>
                <ScrollEnd $h={65}><Chevron up /></ScrollEnd>
                <ScrollThumb $h={20} />
                <ScrollFill />
                <ScrollEnd $h={14}><Chevron /></ScrollEnd>
              </ScrollTrack>
            </PropGrid>
            <PropHelp>
              <HelpTitle>Font</HelpTitle>
              The font used to display text in the control.
            </PropHelp>
          </PropsPane>
        </RightColumn>
      </Main>
      <StatusBar>
        <StatusText>Ready</StatusText>
        <StatusCell $w={149}>
          <svg width="15" height="15"><path d="M6.5 0v14M1 4h13M7 7h6v7H7" fill="none" stroke="#cfd6e0" strokeDasharray="2 1" /></svg>
          352 , 210
        </StatusCell>
        <StatusCell $w={60}>
          <svg width="15" height="15"><path d="M3 3v11M0 14h7M8 3h6v7H8M9 6l4-3" fill="none" stroke="#cfd6e0" strokeDasharray="2 1" /></svg>
          0 x 1
        </StatusCell>
      </StatusBar>
      <TaskBar>
        <StartSlot><svg width="12" height="3"><path d="M0 0h5.500v3H0ZM6.500 0H12v3H6.500Z" fill="#f2f2f2" /></svg></StartSlot>
        <SearchBox><svg width="10" height="3"><circle cx="5" cy="5" r="4" fill="none" stroke="#333" /></svg></SearchBox>
        <TaskIcon $w={45}><svg width="12" height="8"><circle cx="6" cy="8" r="5" fill="none" stroke="#c8ced2" /></svg></TaskIcon>
        <TaskIcon $w={48}><svg width="14" height="8"><path d="M1 3v5M6 1v7M11 1v7" stroke="#e2e2e2" /></svg></TaskIcon>
        <TaskIcon $w={47}><svg width="22" height="8"><rect y="1" width="22" height="7" fill="#d8a93c" /></svg></TaskIcon>
        <TaskIcon $w={47}><svg width="20" height="8"><circle cx="10" cy="10" r="9" fill="#2fb6cc" /></svg></TaskIcon>
        <TaskIcon $w={47}><svg width="16" height="8"><path d="M8 0l8 8H0Z" fill="#1c6fc4" /></svg></TaskIcon>
        <TaskIcon $w={44}><svg width="12" height="8"><rect x="1" y="1" width="10" height="9" fill="none" stroke="#fff" strokeWidth="1.5" /></svg></TaskIcon>
        <TaskIcon $w={50}><svg width="14" height="8"><path d="M7 0l5 8H2Z" fill="#f3d23c" /></svg></TaskIcon>
        <TaskIcon $w={45} $active />
        <TaskIcon $w={50}><svg width="20" height="8"><rect y="1" width="20" height="8" fill="#1f7244" /><rect x="12" y="1" width="6" height="3" fill="#fff" /></svg></TaskIcon>
        <TaskIcon $w={30}><svg width="20" height="8"><circle cx="10" cy="10" r="9" fill="none" stroke="#8a979f" strokeWidth="1.5" /></svg></TaskIcon>
        <Clock>12:02 PM</Clock>
      </TaskBar>
      <BlackBar />
      <Watermark>
        <WmSmall>RECORDED WITH</WmSmall>
        <WmRow>SCREENCAST<WmLogo />MATIC</WmRow>
      </Watermark>
      <Cursor $x={635} $y={20} width="14" height="19" viewBox="0 0 14 19">
        <path d={arrowPath} fill="#fff" stroke="#222" strokeWidth="1" />
      </Cursor>
      <Cursor $x={39} $y={458} width="10" height="14" viewBox="0 0 14 19">
        <path d={arrowPath} fill="#fff" stroke="#222" strokeWidth="1.3" />
      </Cursor>
    </Frame>
  );
}
